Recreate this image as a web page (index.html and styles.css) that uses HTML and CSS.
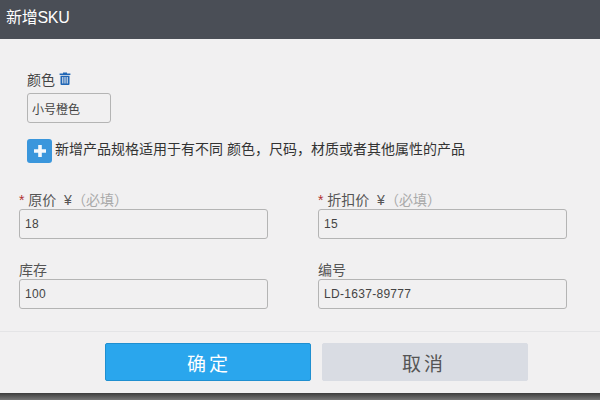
FILE: index.html
```html
<!DOCTYPE html>
<html lang="en">
<head>
    <meta charset="UTF-8">
    <title>新增SKU</title>
    <link rel="stylesheet" href="styles.css">
</head>
<body>
    <div class="dialog">
        <div class="header">新增SKU</div>
        <div class="content">
            <div class="color-block">
                <div class="color-label">
                    <span>颜色</span>
                    <svg class="trash" viewBox="0 0 12 13" width="12" height="13">
                        <path d="M4 1.5V.6h4v.9h3.4v1.6H.6V1.5z" fill="#2166b5"/>
                        <path fill-rule="evenodd" d="M1.5 3.8h9v8.2a1 1 0 0 1-1 1h-7a1 1 0 0 1-1-1zM3.3 5v6.4h1V5zM5.5 5v6.4h1V5zM7.7 5v6.4h1V5z" fill="#2166b5"/>
                    </svg>
                </div>
                <input class="color-input" type="text" value="小号橙色">
            </div>
            <div class="add-row">
                <span class="add-btn">
                    <svg viewBox="0 0 14 14" width="14" height="14">
                        <path d="M5.2 1h3.6v4.2H13v3.6H8.8V13H5.2V8.8H1V5.2h4.2z" fill="#f4f8fc"/>
                    </svg>
                </span>
                <span class="add-text">新增产品规格适用于有不同 颜色，尺码，材质或者其他属性的产品</span>
            </div>
            <div class="fields">
                <div class="field">
                    <label><i>*</i> 原价 &nbsp;¥<em>（必填）</em></label>
                    <input type="text" value="18">
                </div>
                <div class="field">
                    <label><i>*</i> 折扣价 &nbsp;¥<em>（必填）</em></label>
                    <input type="text" value="15">
                </div>
                <div class="field">
                    <label>库存</label>
                    <input type="text" value="100">
                </div>
                <div class="field">
                    <label>编号</label>
                    <input type="text" value="LD-1637-89777">
                </div>
            </div>
        </div>
        <div class="footer">
            <button class="btn ok">确定</button>
            <button class="btn cancel">取消</button>
        </div>
    </div>
    <div class="shade"></div>
</body>
</html>
```

FILE: styles.css
```css
html, body{
    margin: 0;
    padding: 0;
}
body{
    width: 600px;
    height: 400px;
    overflow: hidden;
    background: #f1f0f1;
    font-family: "Liberation Sans", "Noto Sans CJK SC", sans-serif;
    font-size: 14px;
    color: #444;
}
.dialog{
    height: 393px;
    display: flex;
    flex-direction: column;
}
.header{
    height: 39px;
    line-height: 35px;
    padding-left: 6px;
    background: #4a4e56;
    color: #fff;
    font-size: 16px;
    letter-spacing: -0.3px;
}
.content{
    flex: 1;
    padding: 0 33px 0 19px;
}
.color-block{
    margin: 30px 0 0 8px;
}
.color-label{
    display: flex;
    align-items: center;
    gap: 4px;
    height: 19px;
    margin-bottom: 5px;
}
.color-input{
    display: block;
    box-sizing: border-box;
    width: 84px;
    height: 30px;
    padding: 0 4px;
    border: 1px solid #b4b4b4;
    border-radius: 3px;
    background: transparent;
    font: 12px "Liberation Sans", "Noto Sans CJK SC", sans-serif;
    color: #444;
}
.add-row{
    display: flex;
    align-items: center;
    gap: 3px;
    margin: 16px 0 0 8px;
    height: 24px;
    color: #333;
}
.add-text{
    padding-bottom: 7px;
    white-space: nowrap;
}
.add-btn{
    display: flex;
    align-items: center;
    justify-content: center;
    width: 25px;
    height: 24px;
    border-radius: 3px;
    background: #3a96dc;
}
.fields{
    display: grid;
    grid-template-columns: 249px 249px;
    column-gap: 50px;
    row-gap: 21px;
    margin-top: 27px;
}
.field label{
    display: block;
    height: 19px;
    line-height: 20px;
    color: #555;
    white-space: nowrap;
}
.field i{
    font-style: normal;
    color: #b03030;
}
.field em{
    font-style: normal;
    color: #aaa;
}
.field input{
    display: block;
    box-sizing: border-box;
    width: 249px;
    height: 30px;
    padding: 0 5px;
    border: 1px solid #b4b4b4;
    border-radius: 3px;
    background: transparent;
    font: 12px "Liberation Sans", "Noto Sans CJK SC", sans-serif;
    letter-spacing: 0.3px;
    color: #444;
}
.footer{
    display: flex;
    justify-content: flex-start;
    gap: 11px;
    height: 62px;
    padding: 11px 0 0 105px;
    box-sizing: border-box;
    border-top: 1px solid #e4e4e6;
}
.btn{
    width: 206px;
    height: 38px;
    border-radius: 2px;
    font: 19px "Liberation Sans", "Noto Sans CJK SC", sans-serif;
    letter-spacing: 3px;
    cursor: pointer;
}
.ok{
    background: #2aa6ed;
    border: 1px solid #1f8fd0;
    color: #fff;
    padding-left: 8px;
}
.cancel{
    background: #d9dce3;
    border: 1px solid #d9dce3;
    color: #555;
    padding-right: 8px;
}
.shade{
    height: 7px;
    background: linear-gradient(#3c3c3c, #777);
}
```
